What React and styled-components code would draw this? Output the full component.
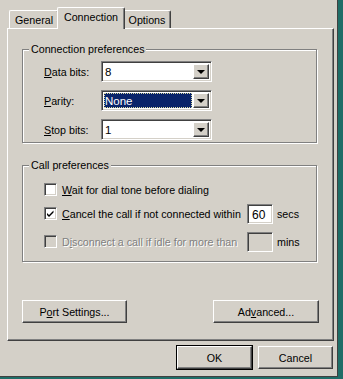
import React from 'react';
import styled, { createGlobalStyle, css } from 'styled-components';

const GlobalStyle = createGlobalStyle`
  html, body {
    margin: 0;
    padding: 0;
    background: #1f6d67;
  }
  body {
    font-family: 'Liberation Sans', Arial, sans-serif;
    font-size: 10.7px;
    color: #000;
  }
`;

const sunken = css`
  border: 1px solid;
  border-color: #808080 #fff #fff #808080;
  box-shadow: inset 1px 1px 0 #404040, inset -1px -1px 0 #d4d0c8;
`;

const raised = css`
  border: 1px solid;
  border-color: #fff #404040 #404040 #fff;
  box-shadow: inset -1px -1px 0 #808080;
`;

const Window = styled.div`
  width: 338px;
  height: 377px;
  box-sizing: border-box;
  background: #d4d0c8;
  border-right: 1px solid #404040;
  border-bottom: 1px solid #404040;
  padding: 6px 3px 0 7px;
  display: flex;
  flex-direction: column;
`;

const TabStrip = styled.div`
  display: flex;
  align-items: flex-end;
  height: 22px;
  padding-left: 2px;
`;

const Tab = styled.div`
  position: relative;
  box-sizing: border-box;
  width: ${(p) => p.$width}px;
  height: 18px;
  padding-top: 3px;
  line-height: 13px;
  text-align: center;
  border-top: 1px solid #fff;
  border-left: 1px solid #fff;
  border-right: 1px solid #404040;
  border-radius: 2px 2px 0 0;
  box-shadow: inset -1px 0 0 #808080;
  background: #d4d0c8;

  ${(p) =>
    p.$active &&
    css`
      z-index: 1;
      height: 22px;
      margin: 0 -2px -1px;
      padding-top: 3px;
    `}
`;

const Panel = styled.div`
  width: 327px;
  height: 313px;
  box-sizing: border-box;
  border: 1px solid;
  border-color: #fff #404040 #404040 #fff;
  box-shadow: inset -1px -1px 0 #808080;
  padding: 14px 16px 0 14px;
  display: flex;
  flex-direction: column;
`;

const Group = styled.fieldset`
  margin: ${(p) => p.$top || 0}px 0 0;
  padding: ${(p) => p.$pt}px 0 ${(p) => p.$bottom}px 6px;
  min-width: 0;
  border: 1px solid #808080;
  box-shadow: 1px 1px 0 #fff, inset 1px 1px 0 #fff;
  display: flex;
  flex-direction: column;
  gap: ${(p) => p.$gap || 0}px;
`;

const Legend = styled.legend`
  margin: 0;
  padding: 0 2px;
  line-height: 13px;
  background: #d4d0c8;
`;

const FieldRow = styled.div`
  display: flex;
  align-items: center;
  height: 21px;
  margin-left: 15px;
`;

const FieldLabel = styled.span`
  width: 57px;
`;

const Key = styled.span`
  text-decoration: underline;
`;

const Combo = styled.div`
  ${sunken};
  box-sizing: border-box;
  width: 111px;
  height: 21px;
  background: #fff;
  padding: 2px;
  display: flex;
  align-items: stretch;
`;

const ComboValue = styled.div`
  flex: 1;
  display: flex;
  align-items: center;
  padding-left: 1px;
  margin-right: 1px;
  box-sizing: border-box;
  font-size: 11.5px;
  ${(p) =>
    p.$selected &&
    css`
      background: #0a246a;
      color: #fff;
      outline: 1px dotted #d8d8a0;
      outline-offset: -1px;
    `}
`;

const DropButton = styled.div`
  ${raised};
  box-sizing: border-box;
  width: 16px;
  background: #d4d0c8;
  display: flex;
  align-items: center;
  justify-content: center;
`;

const Arrow = styled.span`
  width: 0;
  height: 0;
  border-left: 4px solid transparent;
  border-right: 4px solid transparent;
  border-top: 4px solid #000;
  margin-left: -1px;
`;

const CheckRow = styled.div`
  display: flex;
  align-items: center;
  height: 21px;
  margin: ${(p) => p.$mt || 0}px 0 0 15px;
  color: ${(p) => (p.$disabled ? '#808080' : '#000')};
  text-shadow: ${(p) => (p.$disabled ? '1px 1px 0 #fff' : 'none')};
`;

const Box = styled.span`
  ${sunken};
  box-sizing: border-box;
  width: 13px;
  height: 13px;
  flex: none;
  margin-right: 5px;
  background: ${(p) => (p.$disabled ? '#d4d0c8' : '#fff')};
  display: flex;
  align-items: center;
  justify-content: center;
`;

const CheckText = styled.span`
  white-space: nowrap;
  flex: none;
  width: ${(p) => (p.$width ? `${p.$width}px` : 'auto')};
`;

const Edit = styled.span`
  ${sunken};
  box-sizing: border-box;
  flex: none;
  width: 26px;
  height: 20px;
  background: ${(p) => (p.$disabled ? '#d4d0c8' : '#fff')};
  padding: 3px 0 0 4px;
  color: #000;
  text-shadow: none;
  font-size: 12px;
`;

const Unit = styled.span`
  margin-left: 4px;
  color: #000;
  text-shadow: none;
`;

const ButtonRow = styled.div`
  display: flex;
  margin-top: ${(p) => p.$mt}px;
  margin-right: ${(p) => p.$mr || 0}px;
  justify-content: ${(p) => p.$justify || 'space-between'};
  gap: 6px;
`;

const Button = styled.div`
  ${raised};
  box-sizing: border-box;
  width: ${(p) => p.$width}px;
  height: 23px;
  background: #d4d0c8;
  display: flex;
  align-items: center;
  justify-content: center;

  ${(p) =>
    p.$default &&
    css`
      outline: 1px solid #000;
      outline-offset: 0;
    `}
`;

const CheckMark = () => (
  <svg width="9" height="9" viewBox="0 0 9 9">
    <path d="M1 4 L3 6 L7.5 1.5 L7.5 3.5 L3 8 L1 6 Z" fill="#000" />
  </svg>
);

const ComboBox = ({ value, selected }) => (
  <Combo>
    <ComboValue $selected={selected}>{value}</ComboValue>
    <DropButton>
      <Arrow />
    </DropButton>
  </Combo>
);

const App = () => {
  return (
    <>
      <GlobalStyle />
      <Window>
        <TabStrip>
          <Tab $width={50}>General</Tab>
          <Tab $width={68} $active>
            Connection
          </Tab>
          <Tab $width={48}>Options</Tab>
        </TabStrip>

        <Panel>
          <Group $pt={5} $bottom={2} $gap={8}>
            <Legend>Connection preferences</Legend>
            <FieldRow>
              <FieldLabel>
                <Key>D</Key>ata bits:
              </FieldLabel>
              <ComboBox value="8" />
            </FieldRow>
            <FieldRow>
              <FieldLabel>
                <Key>P</Key>arity:
              </FieldLabel>
              <ComboBox value="None" selected />
            </FieldRow>
            <FieldRow>
              <FieldLabel>
                <Key>S</Key>top bits:
              </FieldLabel>
              <ComboBox value="1" />
            </FieldRow>
          </Group>

          <Group $top={16} $pt={7} $bottom={9}>
            <Legend>Call preferences</Legend>
            <CheckRow>
              <Box />
              <CheckText>
                <Key>W</Key>ait for dial tone before dialing
              </CheckText>
            </CheckRow>
            <CheckRow $mt={3}>
              <Box>
                <CheckMark />
              </Box>
              <CheckText $width={185}>
                <Key>C</Key>ancel the call if not connected within
              </CheckText>
              <Edit>60</Edit>
              <Unit>secs</Unit>
            </CheckRow>
            <CheckRow $mt={7} $disabled>
              <Box $disabled />
              <CheckText $width={185}>
                D<Key>i</Key>sconnect a call if idle for more than
              </CheckText>
              <Edit $disabled />
              <Unit>mins</Unit>
            </CheckRow>
          </Group>

          <ButtonRow $mt={38} $mr={-2}>
            <Button $width={105}>
              P<Key>o</Key>rt Settings...
            </Button>
            <Button $width={106}>
              Ad<Key>v</Key>anced...
            </Button>
          </ButtonRow>
        </Panel>

        <ButtonRow $mt={5} $justify="flex-end" $mr={1}>
          <Button $width={75} $default>
            OK
          </Button>
          <Button $width={75}>Cancel</Button>
        </ButtonRow>
      </Window>
    </>
  );
};

export default App;
